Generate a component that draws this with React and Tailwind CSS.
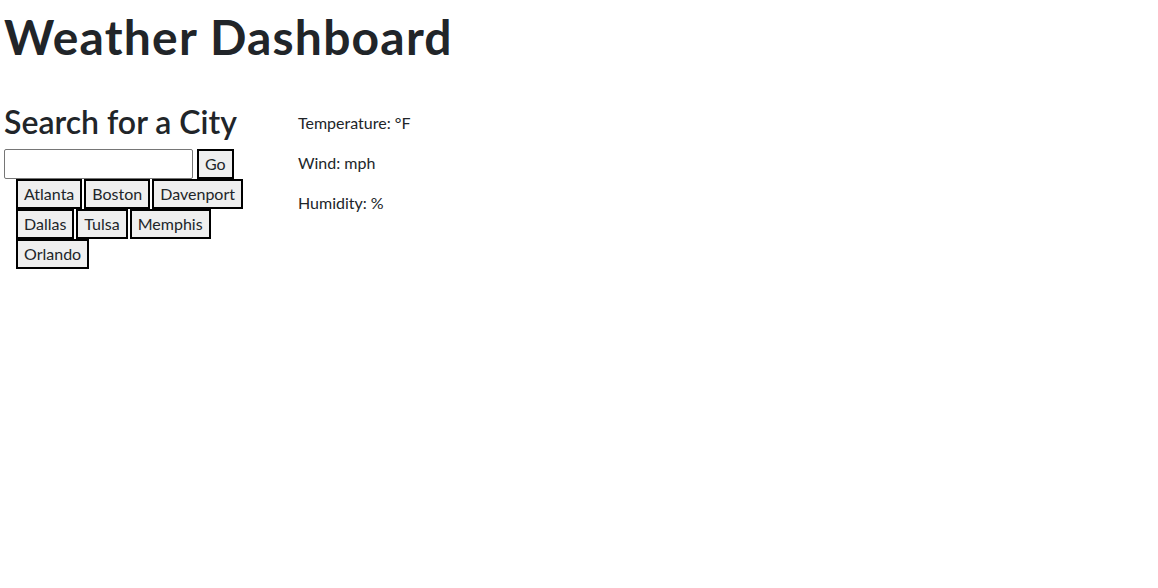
const CITIES = ["Atlanta", "Boston", "Davenport", "Dallas", "Tulsa", "Memphis", "Orlando"];

export default function App() {
  return (
    <div className="min-h-screen bg-white px-1 text-[#212529] font-['Lato',sans-serif]">
      <h1 className="pt-2 text-[48px] font-bold leading-[57.6px] tracking-[1.2px]">Weather Dashboard</h1>

      <div className="mt-[37px] flex">
        {/* search column */}
        <div className="w-[294px] shrink-0">
          <h2 className="mb-2 text-[32px] font-semibold leading-[38.4px]">Search for a City</h2>
          <div className="flex gap-1">
            <input type="text" className="h-[30px] w-[189px] rounded-[2px] border border-[#767676] px-1 text-base" />
            <button className="h-[30px] border-2 border-black bg-[#efefef] px-1.5 text-base leading-6">Go</button>
          </div>
          <div className="ml-3 flex w-[264px] flex-wrap gap-x-[2px]">
            {CITIES.map((c) => (
              <button key={c} className="h-[30px] border-2 border-black bg-[#efefef] px-1.5 text-base leading-6">
                {c}
              </button>
            ))}
          </div>
        </div>

        {/* current weather */}
        <div className="pt-2 text-base leading-6">
          <p className="mb-4">Temperature: °F</p>
          <p className="mb-4">Wind: mph</p>
          <p className="mb-4">Humidity: %</p>
        </div>
      </div>
    </div>
  );
}
